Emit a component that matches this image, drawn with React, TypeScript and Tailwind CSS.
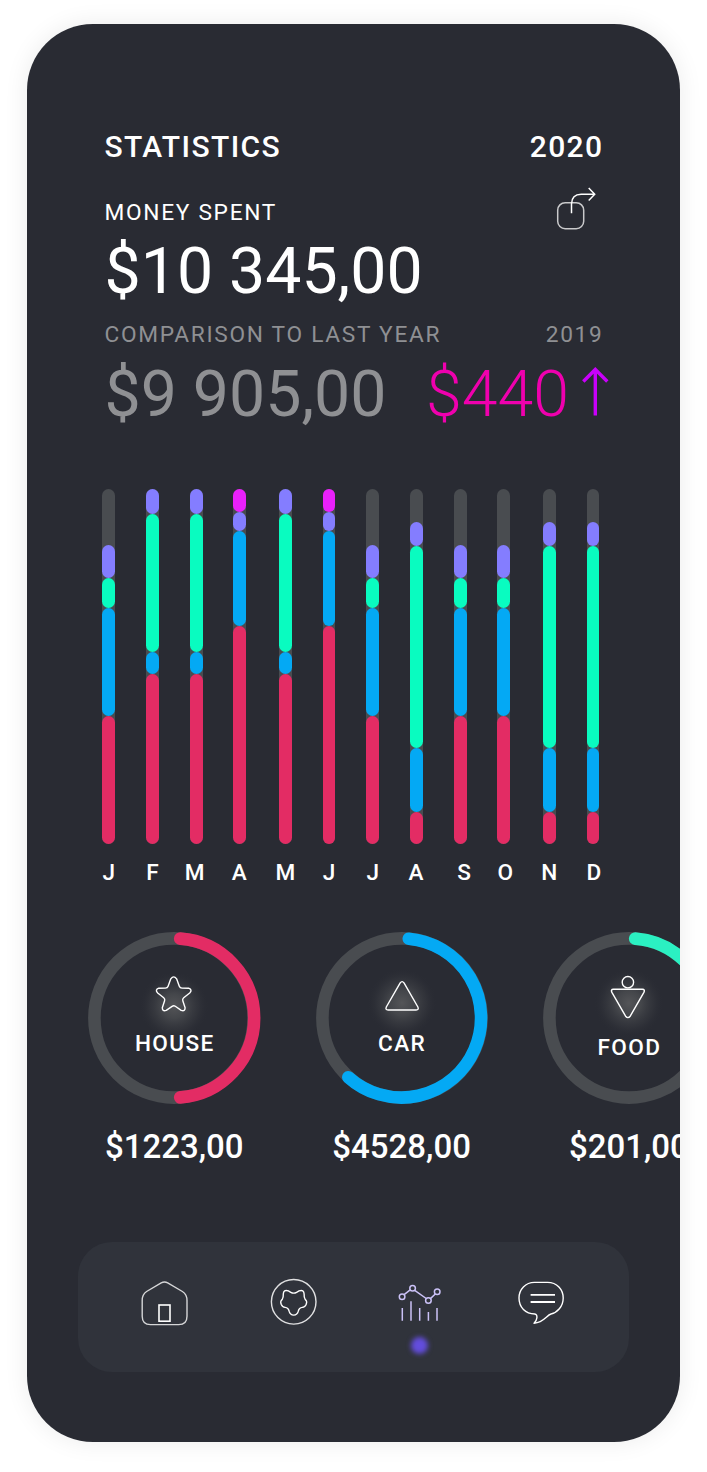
import type { ReactNode } from "react";

type Segment = { color: string; height: number };
type Month = { label: string; column: string; nudge: string; segments: Segment[] };

const VIOLET = "bg-[#847dff]";
const GREEN = "bg-[#09fcc0]";
const BLUE = "bg-[#04a9f4]";
const RED = "bg-[#e32c64]";
const MAGENTA = "bg-[#ea20fb]";

const steady: Segment[] = [
  { color: VIOLET, height: 33 },
  { color: GREEN, height: 30.2 },
  { color: BLUE, height: 108.2 },
  { color: RED, height: 128 },
];
const green: Segment[] = [
  { color: VIOLET, height: 24.6 },
  { color: GREEN, height: 138.6 },
  { color: BLUE, height: 22.2 },
  { color: RED, height: 169.6 },
];
const peak: Segment[] = [
  { color: MAGENTA, height: 22.8 },
  { color: VIOLET, height: 19.2 },
  { color: BLUE, height: 94.6 },
  { color: RED, height: 218.4 },
];
const low: Segment[] = [
  { color: VIOLET, height: 24.3 },
  { color: GREEN, height: 201.2 },
  { color: BLUE, height: 64.6 },
  { color: RED, height: 31.8 },
];

const NARROW = "w-[43.7px]";
const WIDE = "w-[45.5px]";

const months: Month[] = [
  { label: "J", column: NARROW, nudge: "ml-0", segments: steady },
  { label: "F", column: NARROW, nudge: "ml-0", segments: green },
  { label: "M", column: NARROW, nudge: "ml-[-3px]", segments: green },
  { label: "A", column: WIDE, nudge: "ml-[-1px]", segments: peak },
  { label: "M", column: NARROW, nudge: "ml-0", segments: green },
  { label: "J", column: NARROW, nudge: "ml-0", segments: peak },
  { label: "J", column: NARROW, nudge: "ml-0", segments: steady },
  { label: "A", column: NARROW, nudge: "ml-[-1px]", segments: low },
  { label: "S", column: NARROW, nudge: "ml-[8px]", segments: steady },
  { label: "O", column: WIDE, nudge: "ml-[3px]", segments: steady },
  { label: "N", column: NARROW, nudge: "ml-0", segments: low },
  { label: "D", column: NARROW, nudge: "ml-[2px]", segments: low },
];

function ShareIcon() {
  return (
    <svg width="42" height="44" viewBox="0 0 42 44" fill="none" stroke="#fff" strokeWidth="1.5">
      <rect x="1.7" y="16.7" width="26" height="26" rx="7.5" strokeOpacity="0.75" />
      <path d="M15.5 27.3V18Q15.7 8.2 25.2 8.2H38.3M32.7 2L38.7 8.2L32.7 14.4" />
    </svg>
  );
}

function Chart() {
  return (
    <div className="ml-[75.4px] mt-[63px] h-[391px]">
      <div className="flex">
        {months.map((m, i) => (
          <div key={i} className={`shrink-0 ${m.column}`}>
            <div className="flex h-[355px] w-[12.8px] flex-col justify-end rounded-full bg-[#494c50]">
              {m.segments.map((s, j) => (
                <div key={j} className={`shrink-0 rounded-full ${s.color}`} style={{ height: s.height }} />
              ))}
            </div>
            <div className="mt-[15px] flex w-[12.8px] justify-center text-[22.6px] font-medium leading-[28px] text-white">
              <span className={m.nudge}>{m.label}</span>
            </div>
          </div>
        ))}
      </div>
    </div>
  );
}

type RingProps = {
  id: string;
  label: string;
  amount: string;
  stroke: string;
  arc: string;
  glow: [number, number];
  labelTop: string;
  children: ReactNode;
};

function Ring({ id, label, amount, stroke, arc, glow, labelTop, children }: RingProps) {
  return (
    <div className="w-[172px] shrink-0">
      <div className="relative h-[172px] w-[172px]">
        <svg className="absolute inset-0 overflow-visible" width="172" height="172" viewBox="0 0 172 172" fill="none">
          <defs>
            <radialGradient id={id}>
              <stop offset="0" stopColor="#545558" />
              <stop offset="0.35" stopColor="#47494d" stopOpacity="0.9" />
              <stop offset="0.7" stopColor="#383a40" stopOpacity="0.5" />
              <stop offset="1" stopColor="#292b33" stopOpacity="0" />
            </radialGradient>
          </defs>
          <circle cx="86" cy="86" r="79.6" stroke="#494c50" strokeWidth="12.6" />
          <path d={arc} stroke={stroke} strokeWidth="12.6" strokeLinecap="round" />
          <circle cx={glow[0]} cy={glow[1]} r="35" fill={`url(#${id})`} />
          <g stroke="#fff" strokeWidth="1.4" strokeLinejoin="round">{children}</g>
        </svg>
        <div className={`pl-[1px] text-center text-[22.6px] font-medium leading-[28px] tracking-[1.4px] text-white ${labelTop}`}>
          <span className="relative">{label}</span>
        </div>
      </div>
      <div className="mt-[23px] text-center text-[33px] font-medium leading-[40px] text-white">{amount}</div>
    </div>
  );
}

function Nav() {
  return (
    <nav className="ml-[51px] mt-[75px] flex h-[130px] w-[551px] rounded-[34px] bg-[#30333b] pl-[63px] pt-[36px]">
      <svg width="48" height="50" viewBox="0 0 48 50" fill="none" stroke="#fff" strokeWidth="1.4">
        <path strokeOpacity="0.8" d="M1.2 22.5Q1.2 16.3 5.6 13.5L20.2 4.9Q23.5 3.2 26.7 4.9L41.4 13.5Q46 16.3 46 22.5V38.3Q46 46.6 37.7 46.6H9.5Q1.2 46.6 1.2 38.3Z" />
        <rect x="18" y="27" width="11" height="16.2" strokeWidth="1.6" />
      </svg>
      <svg className="ml-[81px]" width="48" height="50" viewBox="0 0 48 50" fill="none" stroke="#fff" strokeWidth="1.4">
        <circle cx="23.7" cy="23.8" r="22.3" strokeOpacity="0.85" />
        <path d="M20.8 14.3C22.6 15.3 24.8 15.3 26.6 14.3L29 12.9Q34 11.2 34.1 16C34 19 34 19.6 35.1 21.2C37 23.4 37 24 36.1 26.6Q35.1 29.2 32.3 29.4C30 29.6 28.8 30.9 28.3 33.2Q27.3 37.1 23.7 37.1T19.1 33.2C18.6 30.9 17.4 29.6 15.1 29.4Q12.3 29.2 11.3 26.6C10.4 24 10.4 23.4 12.3 21.2C13.4 19.6 13.4 19 13.3 16Q13.4 11.2 18.4 12.9Z" />
      </svg>
      <div className="relative ml-[78px] h-[50px] w-[48px]">
        <svg width="48" height="50" viewBox="0 0 48 50" fill="none" stroke="#cbc2f7" strokeWidth="1.5">
          <path d="M8.1 16.7L14.5 11.7M18.7 12.4L30.2 20.5M34.4 20.6L39.3 16" />
          <path d="M6.3 30V42.8M15 23.3V42.8M23.7 30V42.8M32.4 34V42.8M41 30V42.8" />
          <circle cx="6.1" cy="18.8" r="2.8" />
          <circle cx="16.6" cy="10.2" r="2.8" />
          <circle cx="32.4" cy="22.5" r="2.8" />
          <circle cx="41.2" cy="13.8" r="2.8" />
        </svg>
        <span className="absolute left-[15.2px] top-[59px] h-[17px] w-[17px] rounded-full bg-[#634ddd] blur-[2.5px]" />
      </div>
      <svg className="ml-[73px]" width="48" height="50" viewBox="0 0 48 50" fill="none" stroke="#fff" strokeWidth="1.4" strokeLinejoin="round">
        <path d="M17.5 4.4H30.5C40 4.4 46.2 11.5 46.2 20C46.2 28.7 40 34.8 34 36C29.5 37.2 27 44.4 17 45.2C20.5 42.5 21 36.2 17.8 36C8.5 35.6 2 29.5 2 20C2 11.5 8.5 4.4 17.5 4.4Z" />
        <path d="M13.6 16.8H38M13.6 24H38" strokeWidth="1.8" />
      </svg>
    </nav>
  );
}

export default function App() {
  return (
    <div className="h-[1472px] w-[707px] overflow-hidden bg-white pl-[27px] pt-[24px] font-['Roboto',sans-serif]">
      <div className="h-[1418px] w-[653px] overflow-hidden rounded-[66px] bg-[#292b33] pt-[105px] shadow-[0_0_24px_rgba(0,0,0,0.08)]">
        <header className="pl-[77.5px] pr-[76.5px]">
          <div className="flex h-[36px] justify-between text-[30px] font-medium leading-[36px] tracking-[1.4px] text-white">
            <h1>STATISTICS</h1>
            <span>2020</span>
          </div>
          <div className="mt-[21px] flex h-[53px] justify-between">
            <p className="mt-[13px] text-[22.7px] leading-[28px] tracking-[1.7px] text-white">MONEY SPENT</p>
            <div className="mr-[5.5px]">
              <ShareIcon />
            </div>
          </div>
          <p className="h-[64px] whitespace-nowrap text-[64.4px] leading-[64px] text-white">$10 345,00</p>
          <div className="mt-[18px] flex h-[28px] justify-between text-[22.7px] leading-[28px] tracking-[1.7px] text-[#8f9093]">
            <p>COMPARISON TO LAST YEAR</p>
            <span>2019</span>
          </div>
          <div className="mt-[13px] flex h-[64px] whitespace-nowrap text-[64.4px] leading-[64px]">
            <span className="w-[321.5px] shrink-0 text-[#8f9093]">$9 905,00</span>
            <span className="w-[156px] shrink-0 font-light text-[#ef00ae]">$440</span>
            <svg className="mt-[4px] shrink-0" width="28" height="50" viewBox="0 0 28 50" fill="none" stroke="#c900fa" strokeWidth="3.4">
              <path d="M13.3 49.5V4M1.3 15.5L13.3 3.5L25.3 15.5" />
            </svg>
          </div>
        </header>
        <Chart />
        <section className="ml-[61.3px] mt-[52px] flex gap-[55.3px]">
          <Ring
            id="house"
            label="HOUSE"
            amount="$1223,00"
            stroke="#e32c64"
            arc="M92.2 6.6A79.6 79.6 0 0 1 92.2 165.4"
            glow={[86, 74]}
            labelTop="pt-[98px]"
          >
            <path d="M82.8 46.8Q85.7 43 88.6 46.8L91.3 54.2Q92 56 94 56.1L100.6 56.2Q104.8 57.8 101.7 61L95.7 65.8Q94.2 67 94.8 68.8L97.1 75.8Q97.1 79.8 93.2 78.4L87.3 74.3Q85.7 73.2 84.1 74.3L78.2 78.4Q74.3 79.8 74.3 75.8L76.6 68.8Q77.2 67 75.7 65.8L69.7 61Q66.6 57.8 70.8 56.2L77.4 56.1Q79.4 56 80.1 54.2Z" />
          </Ring>
          <Ring
            id="car"
            label="CAR"
            amount="$4528,00"
            stroke="#04a9f4"
            arc="M92.8 6.7A79.6 79.6 0 1 1 32.3 145.2"
            glow={[86, 71]}
            labelTop="pt-[98px]"
          >
            <path d="M84.2 50.9Q86.1 48.3 88 50.9L101.9 75Q103.1 78 100.1 78H72.1Q69.1 78 70.3 75Z" />
          </Ring>
          <Ring
            id="food"
            label="FOOD"
            amount="$201,00"
            stroke="#2bf0c2"
            arc="M92.2 6.6A79.6 79.6 0 0 1 165.6 86"
            glow={[86, 71]}
            labelTop="pt-[102px]"
          >
            <circle cx="84.9" cy="50.2" r="5.7" />
            <path d="M70.4 57.3H99.4Q102.3 57.4 100.9 60.4L87.2 84.2Q84.9 87 82.6 84.2L68.9 60.4Q67.5 57.4 70.4 57.3Z" />
          </Ring>
        </section>
        <Nav />
      </div>
    </div>
  );
}
